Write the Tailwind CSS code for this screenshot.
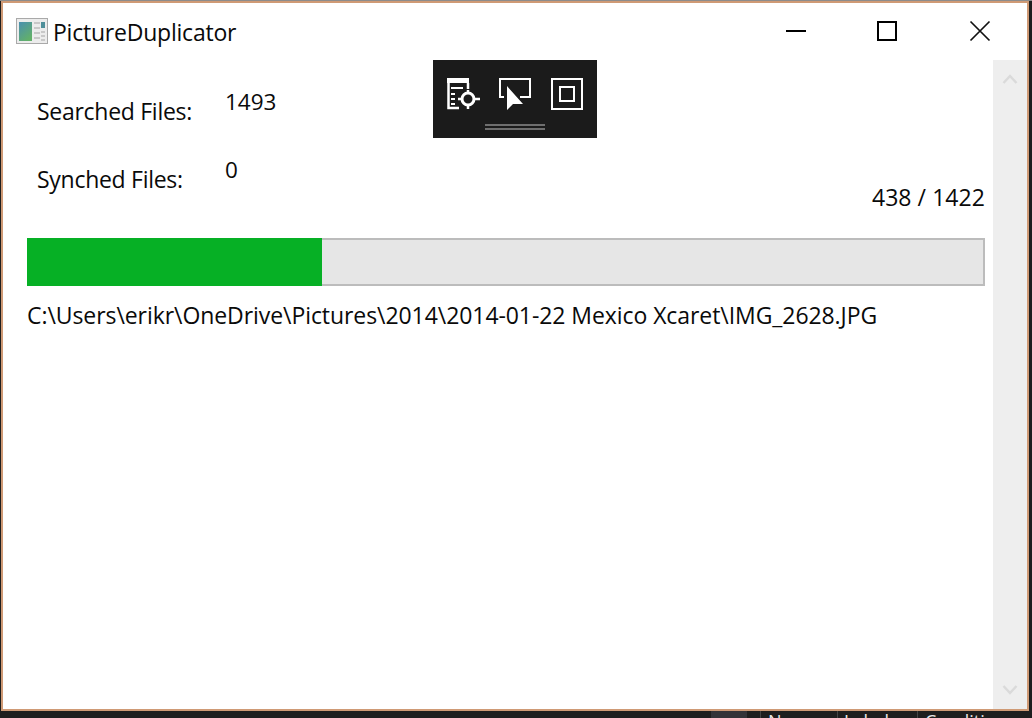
<!DOCTYPE html>
<html lang="en">
<head>
  <meta charset="UTF-8">
  <title>PictureDuplicator</title>
  <script src="https://cdn.jsdelivr.net/npm/@tailwindcss/browser@4"></script>
</head>
<body class="w-[1032px] h-[718px] overflow-hidden bg-[#1e1e1e] font-['Open_Sans',sans-serif] text-[#0a0a0a]">

  <div class="h-[1px] bg-[#8c8c8c]"></div>

  <div class="relative w-[1028px] h-[710px] ml-[1px] border-2 border-[#cf9a75] bg-white flex flex-col">

    <!-- title bar -->
    <div class="h-[57px] flex items-center pl-[13px] shrink-0">
      <svg width="32" height="26" viewBox="0 0 32 26" class="mt-[-1px]">
        <defs>
          <linearGradient id="pic" x1="0" y1="0" x2="0.6" y2="1">
            <stop offset="0" stop-color="#4a8fb0"/>
            <stop offset="1" stop-color="#62b06a"/>
          </linearGradient>
        </defs>
        <rect x="0.5" y="0.5" width="31" height="25" fill="#ececec" stroke="#a9a9a9"/>
        <rect x="3" y="4" width="13" height="19" fill="url(#pic)"/>
        <rect x="25" y="4" width="4" height="6" fill="#4f8f9a"/>
        <path d="M18 5h6M18 10h6M18 15h6M18 20h6M25 14h4M25 18h4M25 22h4" stroke="#bcbcbc" stroke-width="1.500"/>
      </svg>
      <span class="ml-[5px] mt-[2px] text-[23px] tracking-[-0.22px] leading-none">PictureDuplicator</span>
      <div class="ml-auto flex items-center h-full">
        <svg width="94" height="57" viewBox="0 0 94 57" fill="none"><path d="M40 28h20" stroke="#000" stroke-width="2"/></svg>
        <svg width="94" height="57" viewBox="0 0 94 57" fill="none"><rect x="38" y="19" width="18" height="18" stroke="#000" stroke-width="2"/></svg>
        <svg width="92" height="57" viewBox="0 0 92 57" fill="none" class="mr-[1px]"><path d="M36.500 18.500l19 19M55.500 18.500l-19 19" stroke="#111" stroke-width="1.700"/></svg>
      </div>
    </div>

    <!-- content and scrollbar -->
    <div class="flex-1 flex min-h-0">
      <div class="flex-1 pl-[24px] pr-[8px]">
        <div class="h-[178px] relative">
          <div class="grid grid-cols-[188px_auto] pl-[10px] pt-[36px] text-[23px] leading-[30px]">
            <span class="h-[68px] tracking-[-0.28px]">Searched Files:</span>
            <span class="mt-[-9px] text-[22.500px]">1493</span>
            <span class="tracking-[-0.28px]">Synched Files:</span>
            <span class="mt-[-9px] text-[22.500px]">0</span>
          </div>
          <div class="absolute right-0 top-[122px] text-[23px] tracking-[0.06px] leading-[30px]">438 / 1422</div>
        </div>
        <div class="w-[958px] h-[48px] border-2 border-[#bcbcbc] bg-[#e6e6e6]">
          <div class="h-[48px] w-[295px] mt-[-2px] ml-[-2px] bg-[#06b025]"></div>
        </div>
        <p class="mt-[14px] text-[23px] tracking-[-0.07px] leading-[30px] whitespace-nowrap">C:\Users\erikr\OneDrive\Pictures\2014\2014-01-22 Mexico Xcaret\IMG_2628.JPG</p>
      </div>
      <div class="w-[34px] bg-[#eeeeee] flex flex-col justify-between items-center py-[13px] shrink-0">
        <svg width="16" height="12" viewBox="0 0 16 12" fill="none"><path d="M1.500 10L8 3l6.500 7" stroke="#dadada" stroke-width="2.500"/></svg>
        <svg width="16" height="12" viewBox="0 0 16 12" fill="none"><path d="M1.500 2L8 9l6.500-7" stroke="#dadada" stroke-width="2.500"/></svg>
      </div>
    </div>

    <!-- debug toolbar floating over the window -->
    <div class="absolute left-[430px] top-[57px] w-[164px] h-[78px] bg-[#1b1b1b]">
      <svg width="164" height="78" viewBox="0 0 164 78" fill="none">
        <!-- select element -->
        <path d="M14 18h22v5H14z" fill="#fff"/>
        <path d="M15.500 23v25H26M35 23v6" stroke="#fff" stroke-width="2.500"/>
        <path d="M18 28h12M18 34h4M18 39h4M18 44h4" stroke="#fff" stroke-width="2"/>
        <circle cx="35" cy="39" r="6" stroke="#fff" stroke-width="3"/>
        <path d="M35 30v4M35 44v5M25 39h5M40 39h7" stroke="#fff" stroke-width="2.500"/>
        <!-- pointer -->
        <path d="M71 37h-4V19h30v18H87" stroke="#fff" stroke-width="2"/>
        <path d="M74 26v24l6-6h10z" fill="#fff"/>
        <!-- layout -->
        <rect x="119" y="19" width="30" height="30" stroke="#fff" stroke-width="2"/>
        <rect x="127" y="27" width="14" height="14" stroke="#fff" stroke-width="2"/>
        <path d="M52 65h60M52 69h60" stroke="#6e6e6e" stroke-width="2"/>
      </svg>
    </div>
  </div>

  <!-- sliver of the window behind -->
  <div class="relative h-[7px] overflow-hidden">
    <div class="absolute left-[711px] top-0 w-[36px] h-[7px] bg-[#333338]"></div>
    <div class="absolute left-[760px] top-0 h-[7px] w-[272px] flex text-[#e8e8e8] text-[18px] leading-[20px] whitespace-nowrap">
      <span class="w-[77px] border-l border-[#444] pl-[7px]">Name</span>
      <span class="w-[80px] border-l border-[#444] pl-[6px]">Labels</span>
      <span class="border-l border-[#444] pl-[7px]">Condition</span>
    </div>
  </div>

</body>
</html>
